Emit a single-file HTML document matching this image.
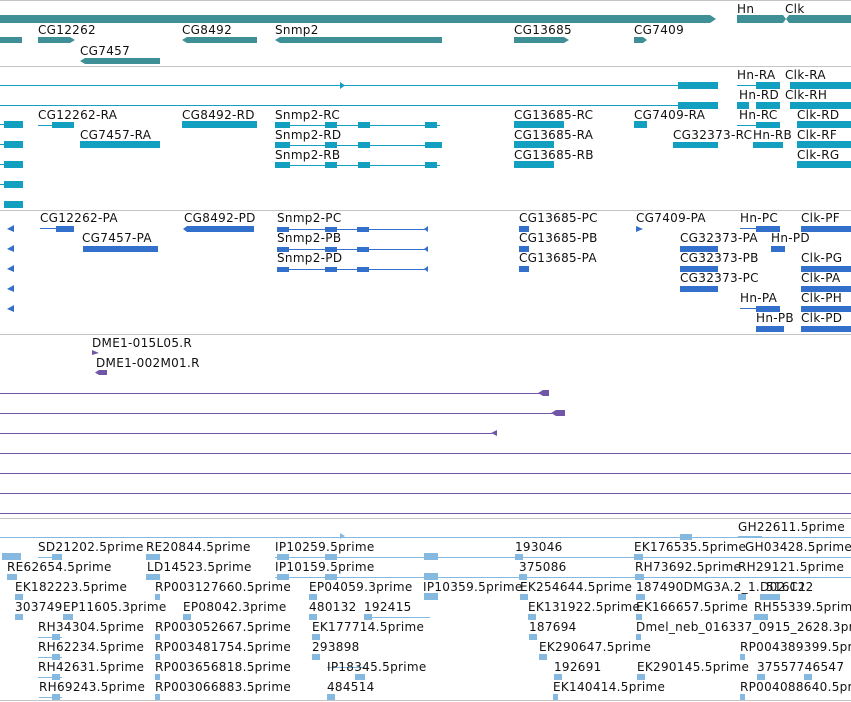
<!DOCTYPE html>
<html><head><meta charset="utf-8"><style>
html,body{margin:0;padding:0;background:#fff;width:851px;height:702px;overflow:hidden}
svg{display:block}
text{font-family:"DejaVu Sans","Liberation Sans",sans-serif;font-size:12px;fill:#111;letter-spacing:0.3px}
</style></head><body>
<svg width="851" height="702" viewBox="0 0 851 702" xmlns="http://www.w3.org/2000/svg">
<g stroke="#c4c4c4" stroke-width="1">
<line x1="0" y1="0.5" x2="851" y2="0.5"/><line x1="0" y1="66.5" x2="851" y2="66.5"/>
<line x1="0" y1="210.5" x2="851" y2="210.5"/><line x1="0" y1="334.5" x2="851" y2="334.5"/>
<line x1="0" y1="518.5" x2="851" y2="518.5"/><line x1="0" y1="700.5" x2="851" y2="700.5"/>
</g>

<g fill="#3f9096">
<rect x="0" y="15" width="710" height="8"/><polygon points="710,15 716,19 710,23"/>
<rect x="737" y="15" width="46" height="8"/><polygon points="783,15 786,19 783,23"/>
<rect x="789" y="15" width="62" height="8"/><polygon points="789,15 786,19 789,23"/>
<rect x="0" y="37" width="22" height="6"/>
<rect x="38" y="37" width="32" height="6"/><polygon points="70,37 75,40 70,43"/>
<rect x="187" y="37" width="70" height="6"/><polygon points="187,37 182,40 187,43"/>
<rect x="280" y="37" width="162" height="6"/><polygon points="280,37 275,40 280,43"/>
<rect x="514" y="37" width="50" height="6"/><polygon points="564,37 569,40 564,43"/>
<rect x="634" y="37" width="9" height="6"/><polygon points="643,37 647,40 643,43"/>
<rect x="85" y="58" width="75" height="6"/><polygon points="85,58 80,61 85,64"/>
</g>
<text x="737" y="13">Hn</text><text x="785" y="13">Clk</text>
<text x="38" y="34">CG12262</text><text x="182" y="34">CG8492</text><text x="275" y="34">Snmp2</text>
<text x="514" y="34">CG13685</text><text x="634" y="34">CG7409</text>
<text x="80" y="55">CG7457</text>

<g stroke="#129fc0" stroke-width="1">
<line x1="0" y1="85.5" x2="680" y2="85.5"/><line x1="0" y1="105.5" x2="680" y2="105.5"/>
<line x1="737" y1="85.5" x2="760" y2="85.5"/><line x1="737" y1="125.5" x2="760" y2="125.5"/>
<line x1="0" y1="124.5" x2="10" y2="124.5"/><line x1="0" y1="144.5" x2="10" y2="144.5"/>
<line x1="0" y1="164.5" x2="10" y2="164.5"/><line x1="0" y1="184.5" x2="10" y2="184.5"/>
<line x1="275" y1="125.5" x2="440" y2="125.5"/><line x1="275" y1="145.5" x2="440" y2="145.5"/><line x1="275" y1="165.5" x2="440" y2="165.5"/>
<line x1="38" y1="125.5" x2="70" y2="125.5"/>
</g>
<g fill="#129fc0">
<polygon points="340,82 345,85.5 340,89"/>
<rect x="678" y="82" width="40" height="7"/><rect x="678" y="102" width="40" height="7"/>
<rect x="756" y="82" width="24" height="7"/><rect x="756" y="102" width="24" height="7"/>
<rect x="737" y="102" width="12" height="7"/>
<rect x="790" y="82" width="61" height="7"/><rect x="790" y="102" width="61" height="7"/>
<rect x="4" y="121" width="19" height="7"/><rect x="4" y="141" width="19" height="7"/>
<rect x="4" y="161" width="19" height="7"/><rect x="4" y="181" width="19" height="7"/><rect x="4" y="201" width="19" height="7"/>
<rect x="52" y="122" width="22" height="6"/>
<rect x="182" y="121" width="75" height="7"/>
<rect x="80" y="141" width="80" height="7"/>
<rect x="275" y="122" width="15" height="6"/><rect x="325" y="122" width="12" height="6"/><rect x="358" y="122" width="12" height="6"/><rect x="425" y="122" width="12" height="6"/>
<rect x="275" y="142" width="15" height="6"/><rect x="325" y="142" width="12" height="6"/><rect x="358" y="142" width="12" height="6"/><rect x="425" y="142" width="17" height="6"/>
<rect x="275" y="162" width="15" height="6"/><rect x="325" y="162" width="12" height="6"/><rect x="358" y="162" width="12" height="6"/><rect x="425" y="162" width="12" height="6"/>
<rect x="514" y="121" width="50" height="7"/><rect x="514" y="141" width="40" height="7"/><rect x="514" y="161" width="40" height="7"/>
<rect x="634" y="121" width="13" height="7"/>
<rect x="673" y="142" width="45" height="6"/>
<rect x="756" y="122" width="24" height="6"/><rect x="753" y="142" width="30" height="6"/>
<rect x="797" y="121" width="54" height="7"/><rect x="797" y="141" width="54" height="7"/><rect x="797" y="161" width="54" height="7"/>
</g>
<text x="737" y="79">Hn-RA</text><text x="785" y="79">Clk-RA</text>
<text x="739" y="99">Hn-RD</text><text x="785" y="99">Clk-RH</text>
<text x="38" y="119">CG12262-RA</text><text x="182" y="119">CG8492-RD</text><text x="275" y="119">Snmp2-RC</text>
<text x="514" y="119">CG13685-RC</text><text x="634" y="119">CG7409-RA</text><text x="739" y="119">Hn-RC</text><text x="797" y="119">Clk-RD</text>
<text x="80" y="139">CG7457-RA</text><text x="275" y="139">Snmp2-RD</text><text x="514" y="139">CG13685-RA</text>
<text x="673" y="139">CG32373-RC</text><text x="753" y="139">Hn-RB</text><text x="797" y="139">Clk-RF</text>
<text x="275" y="159">Snmp2-RB</text><text x="514" y="159">CG13685-RB</text><text x="797" y="159">Clk-RG</text>

<g stroke="#3370cc" stroke-width="1">
<line x1="277" y1="229.5" x2="428" y2="229.5"/><line x1="277" y1="249.5" x2="428" y2="249.5"/><line x1="277" y1="269.5" x2="428" y2="269.5"/>
<line x1="740" y1="228.5" x2="760" y2="228.5"/><line x1="740" y1="308.5" x2="760" y2="308.5"/><line x1="40" y1="228.5" x2="70" y2="228.5"/>
</g>
<g fill="#3370cc">
<polygon points="14,225 7,229 14,232"/><polygon points="14,245 7,249 14,252"/><polygon points="14,265 7,269 14,272"/><polygon points="14,285 7,289 14,292"/><polygon points="14,305 7,309 14,312"/>
<rect x="56" y="226" width="18" height="6"/>
<rect x="187" y="226" width="67" height="6"/><polygon points="187,226 183,229 187,232"/>
<rect x="83" y="246" width="75" height="6"/>
<rect x="277" y="227" width="12" height="5"/><rect x="325" y="227" width="12" height="5"/><rect x="357" y="227" width="12" height="5"/><polygon points="428,226 424,229 428,232"/>
<rect x="277" y="247" width="12" height="5"/><rect x="325" y="247" width="12" height="5"/><rect x="357" y="247" width="12" height="5"/><polygon points="428,246 424,249 428,252"/>
<rect x="277" y="267" width="12" height="5"/><rect x="325" y="267" width="12" height="5"/><rect x="357" y="267" width="12" height="5"/><polygon points="428,266 424,269 428,272"/>
<rect x="519" y="226" width="10" height="6"/><rect x="519" y="246" width="10" height="6"/><rect x="519" y="266" width="10" height="6"/>
<polygon points="636,226 643,229 636,232"/>
<rect x="756" y="226" width="24" height="6"/><rect x="801" y="226" width="50" height="6"/>
<rect x="771" y="246" width="14" height="6"/>
<rect x="680" y="246" width="38" height="6"/><rect x="680" y="266" width="38" height="6"/><rect x="680" y="286" width="38" height="6"/>
<rect x="801" y="266" width="50" height="6"/><rect x="801" y="286" width="50" height="6"/><rect x="801" y="306" width="50" height="6"/><rect x="801" y="326" width="50" height="6"/>
<rect x="756" y="306" width="24" height="6"/><rect x="756" y="326" width="28" height="6"/>
</g>
<text x="40" y="222">CG12262-PA</text><text x="184" y="222">CG8492-PD</text><text x="277" y="222">Snmp2-PC</text>
<text x="519" y="222">CG13685-PC</text><text x="636" y="222">CG7409-PA</text><text x="740" y="222">Hn-PC</text><text x="801" y="222">Clk-PF</text>
<text x="82" y="242">CG7457-PA</text><text x="277" y="242">Snmp2-PB</text><text x="519" y="242">CG13685-PB</text>
<text x="680" y="242">CG32373-PA</text><text x="771" y="242">Hn-PD</text>
<text x="277" y="262">Snmp2-PD</text><text x="519" y="262">CG13685-PA</text><text x="680" y="262">CG32373-PB</text><text x="801" y="262">Clk-PG</text>
<text x="680" y="282">CG32373-PC</text><text x="801" y="282">Clk-PA</text>
<text x="740" y="302">Hn-PA</text><text x="801" y="302">Clk-PH</text>
<text x="756" y="322">Hn-PB</text><text x="801" y="322">Clk-PD</text>

<g stroke="#7156a8" stroke-width="1">
<line x1="0" y1="393.5" x2="540" y2="393.5"/><line x1="0" y1="413.5" x2="552" y2="413.5"/><line x1="0" y1="433.5" x2="492" y2="433.5"/>
<line x1="0" y1="453.5" x2="851" y2="453.5"/><line x1="0" y1="473.5" x2="851" y2="473.5"/><line x1="0" y1="493.5" x2="851" y2="493.5"/><line x1="0" y1="513.5" x2="851" y2="513.5"/>
</g>
<g fill="#7156a8">
<polygon points="92,350 99,353 92,355"/>
<rect x="99" y="370" width="8" height="5"/><polygon points="99,370 95,372.5 99,375"/>
<rect x="543" y="390" width="6" height="6"/><polygon points="543,390 538,393 543,396"/>
<rect x="556" y="410" width="9" height="6"/><polygon points="556,410 551,413 556,416"/>
<polygon points="497,430 491,433 497,436"/>
</g>
<text x="92" y="347">DME1-015L05.R</text><text x="96" y="367">DME1-002M01.R</text>

<g stroke="#86b9df" stroke-width="1">
<line x1="0" y1="537.5" x2="851" y2="537.5"/>
<line x1="275" y1="557.5" x2="851" y2="557.5"/><line x1="275" y1="577.5" x2="851" y2="577.5"/>
<line x1="364" y1="617.5" x2="430" y2="617.5"/>
<line x1="738" y1="536.5" x2="762" y2="536.5"/><line x1="745" y1="557.5" x2="768" y2="557.5"/><line x1="738" y1="577.5" x2="762" y2="577.5"/>
<line x1="38" y1="557.5" x2="62" y2="557.5"/><line x1="38" y1="637.5" x2="62" y2="637.5"/><line x1="38" y1="657.5" x2="62" y2="657.5"/><line x1="38" y1="677.5" x2="62" y2="677.5"/><line x1="39" y1="697.5" x2="62" y2="697.5"/>
<line x1="327" y1="667.5" x2="365" y2="667.5"/>
</g>
<g fill="#86b9df">
<polygon points="340,533 345,536 340,539"/><rect x="680" y="534" width="12" height="6"/>
<rect x="2" y="553" width="19" height="7"/><rect x="52" y="554" width="10" height="6"/><rect x="146" y="554" width="14" height="6"/>
<rect x="277" y="554" width="12" height="6"/><rect x="325" y="554" width="12" height="6"/><rect x="424" y="553" width="14" height="7"/>
<rect x="515" y="554" width="8" height="6"/><rect x="634" y="554" width="9" height="6"/>
<rect x="7" y="574" width="10" height="6"/><rect x="146" y="574" width="14" height="6"/>
<rect x="277" y="574" width="12" height="6"/><rect x="325" y="574" width="12" height="6"/><rect x="424" y="573" width="14" height="7"/>
<rect x="519" y="574" width="8" height="6"/><rect x="635" y="574" width="9" height="6"/>
<rect x="15" y="594" width="8" height="6"/><rect x="155" y="594" width="5" height="6"/><rect x="309" y="594" width="8" height="6"/>
<rect x="424" y="593" width="14" height="7"/><rect x="520" y="594" width="8" height="6"/><rect x="636" y="594" width="9" height="6"/>
<rect x="760" y="594" width="20" height="6"/><rect x="738" y="594" width="8" height="6"/><polygon points="770,594 765,597 770,600"/>
<rect x="15" y="614" width="8" height="6"/><rect x="63" y="614" width="10" height="6"/><rect x="183" y="614" width="8" height="6"/>
<rect x="309" y="614" width="8" height="6"/><rect x="364" y="614" width="8" height="6"/><rect x="528" y="614" width="8" height="6"/>
<rect x="636" y="614" width="6" height="6"/><rect x="754" y="614" width="14" height="6"/>
<rect x="52" y="634" width="8" height="6"/><rect x="155" y="634" width="5" height="6"/><rect x="312" y="634" width="8" height="6"/><rect x="529" y="634" width="8" height="6"/><rect x="636" y="634" width="5" height="6"/>
<rect x="52" y="654" width="8" height="6"/><rect x="155" y="654" width="5" height="6"/><rect x="312" y="654" width="8" height="6"/><rect x="539" y="654" width="8" height="6"/><rect x="740" y="654" width="5" height="6"/>
<rect x="52" y="674" width="8" height="6"/><rect x="155" y="674" width="5" height="6"/><rect x="355" y="674" width="10" height="6"/><rect x="554" y="674" width="8" height="6"/><rect x="637" y="674" width="8" height="6"/><rect x="757" y="674" width="8" height="6"/><rect x="804" y="674" width="8" height="6"/>
<rect x="52" y="694" width="8" height="6"/><rect x="155" y="694" width="5" height="6"/><rect x="327" y="694" width="8" height="6"/><rect x="553" y="694" width="5" height="6"/><rect x="740" y="694" width="5" height="6"/>
</g>
<text x="738" y="531">GH22611.5prime</text>
<text x="38" y="551">SD21202.5prime</text><text x="146" y="551">RE20844.5prime</text><text x="275" y="551">IP10259.5prime</text>
<text x="515" y="551">193046</text><text x="634" y="551">EK176535.5prime</text><text x="745" y="551">GH03428.5prime</text>
<text x="7" y="571">RE62654.5prime</text><text x="147" y="571">LD14523.5prime</text><text x="275" y="571">IP10159.5prime</text>
<text x="519" y="571">375086</text><text x="635" y="571">RH73692.5prime</text><text x="738" y="571">RH29121.5prime</text>
<text x="15" y="591">EK182223.5prime</text><text x="155" y="591">RP003127660.5prime</text><text x="309" y="591">EP04059.3prime</text>
<text x="423" y="591">IP10359.5prime</text><text x="520" y="591">EK254644.5prime</text><text x="636" y="591">187490DMG3A.2_1.D02.C1</text><text x="766" y="591">516122</text>
<text x="15" y="611">303749</text><text x="63" y="611">EP11605.3prime</text><text x="183" y="611">EP08042.3prime</text>
<text x="309" y="611">480132</text><text x="364" y="611">192415</text><text x="528" y="611">EK131922.5prime</text>
<text x="636" y="611">EK166657.5prime</text><text x="754" y="611">RH55339.5prime</text>
<text x="38" y="631">RH34304.5prime</text><text x="155" y="631">RP003052667.5prime</text><text x="312" y="631">EK177714.5prime</text>
<text x="529" y="631">187694</text><text x="636" y="631">Dmel_neb_016337_0915_2628.3prime</text>
<text x="38" y="651">RH62234.5prime</text><text x="155" y="651">RP003481754.5prime</text><text x="312" y="651">293898</text>
<text x="539" y="651">EK290647.5prime</text><text x="740" y="651">RP004389399.5prime</text>
<text x="38" y="671">RH42631.5prime</text><text x="155" y="671">RP003656818.5prime</text><text x="327" y="671">IP18345.5prime</text>
<text x="554" y="671">192691</text><text x="637" y="671">EK290145.5prime</text><text x="757" y="671">37557746547</text>
<text x="39" y="691">RH69243.5prime</text><text x="155" y="691">RP003066883.5prime</text><text x="327" y="691">484514</text>
<text x="553" y="691">EK140414.5prime</text><text x="740" y="691">RP004088640.5prime</text>
</svg>
</body></html>
